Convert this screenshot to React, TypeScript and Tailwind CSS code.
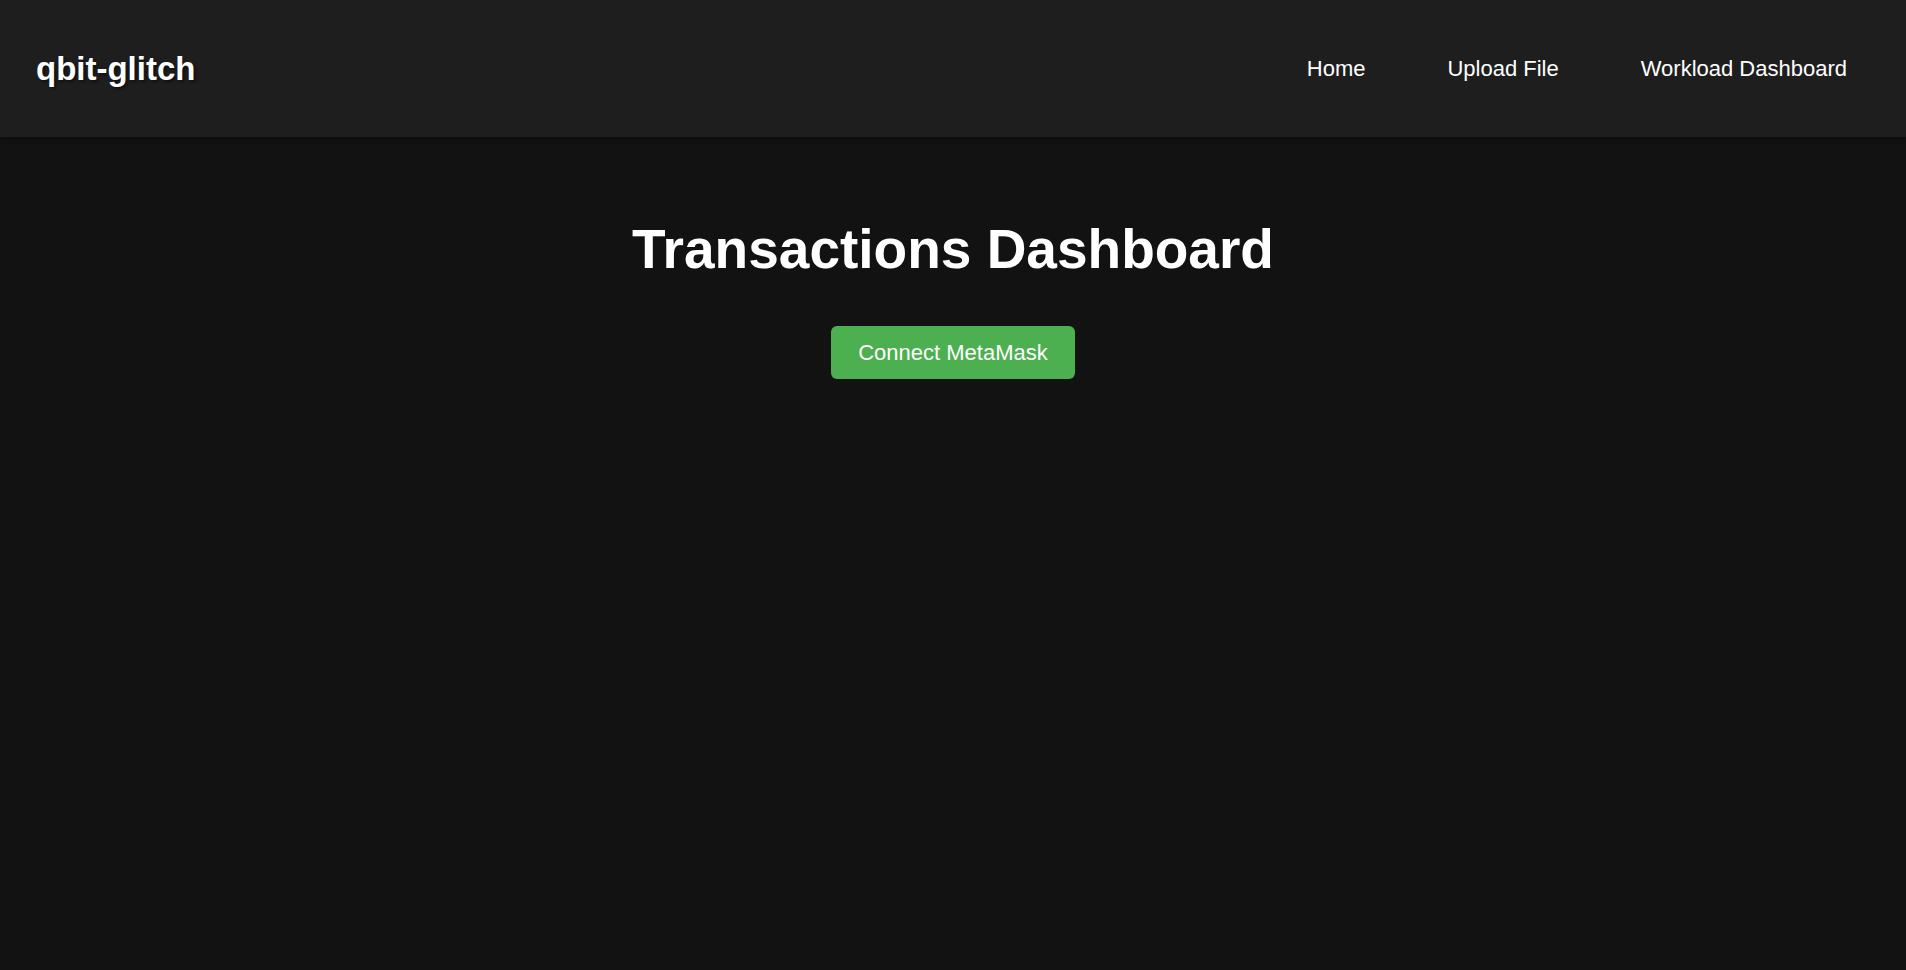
export default function App() {
  return (
    <div className="min-h-screen bg-[#121212] text-white font-['Liberation_Sans',Arial,sans-serif]">
      {/* Navbar */}
      <header className="h-[137px] bg-[#1e1e1e] flex items-center justify-between pl-[36px] pr-[39px] shadow-[0_2px_4px_rgba(0,0,0,0.3)]">
        <div className="text-[33px] font-bold leading-none [text-shadow:2px_2px_3px_rgba(0,0,0,0.5)]">qbit-glitch</div>
        <nav className="flex items-center gap-[42px] text-[22px]">
          <a className="px-[20px] text-white">Home</a>
          <a className="px-[20px] text-white">Upload File</a>
          <a className="px-[20px] text-white">Workload Dashboard</a>
        </nav>
      </header>

      <main className="flex flex-col items-center pt-[80px]">
        <h1 className="text-[55px] font-bold leading-[64px]">Transactions Dashboard</h1>
        <button className="mt-[45px] w-[244px] h-[53px] rounded-[6px] bg-[#4caf50] text-white text-[22px] flex items-center justify-center">
          Connect MetaMask
        </button>
      </main>
    </div>
  );
}
